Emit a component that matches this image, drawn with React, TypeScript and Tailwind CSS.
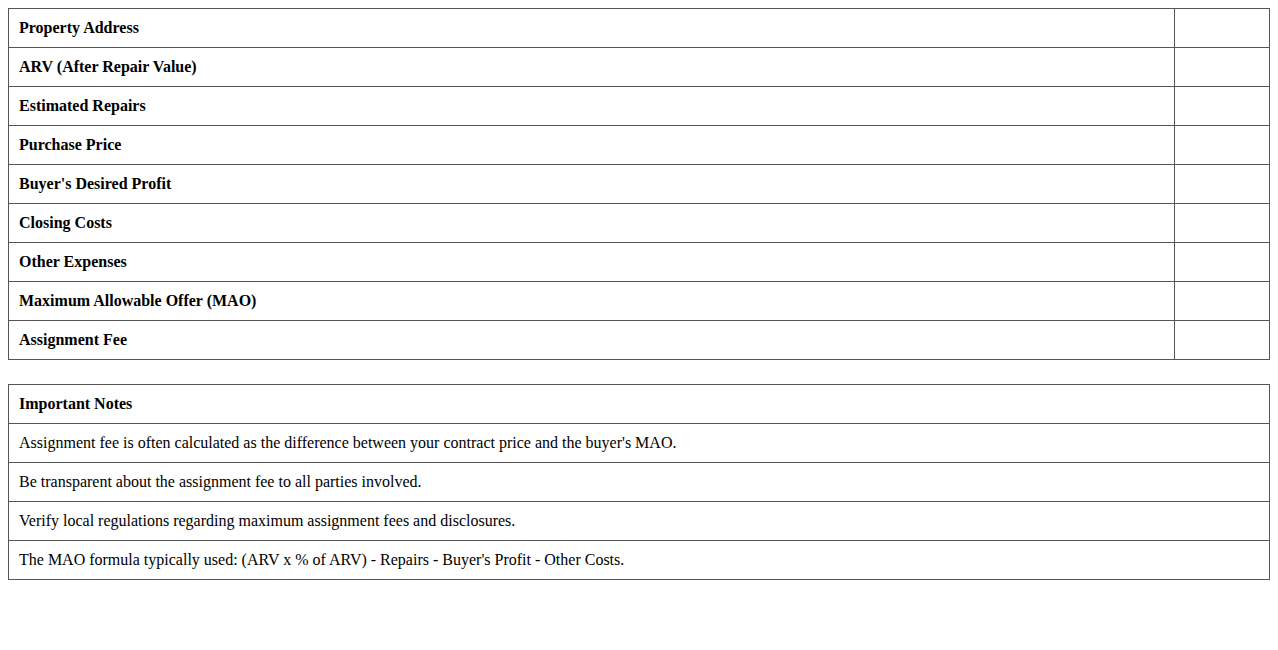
const FIELDS = [
  "Property Address",
  "ARV (After Repair Value)",
  "Estimated Repairs",
  "Purchase Price",
  "Buyer's Desired Profit",
  "Closing Costs",
  "Other Expenses",
  "Maximum Allowable Offer (MAO)",
  "Assignment Fee",
];

const NOTES = [
  "Assignment fee is often calculated as the difference between your contract price and the buyer's MAO.",
  "Be transparent about the assignment fee to all parties involved.",
  "Verify local regulations regarding maximum assignment fees and disclosures.",
  "The MAO formula typically used: (ARV x % of ARV) - Repairs - Buyer's Profit - Other Costs.",
];

export default function App() {
  return (
    <div className="min-h-screen bg-white p-2 text-[16px] leading-[18px] text-black font-['Liberation_Serif','Times_New_Roman',serif]">
      {/* Deal worksheet */}
      <table className="mb-6 w-full border-collapse border border-[#555]">
        <tbody>
          {FIELDS.map((label) => (
            <tr key={label}>
              <td className="border border-[#555] px-[10px] py-[10px] text-left font-bold">{label}</td>
              <td className="w-[95px] border border-[#555] px-[10px] py-[10px]" />
            </tr>
          ))}
        </tbody>
      </table>

      {/* Notes */}
      <table className="w-full border-collapse border border-[#555]">
        <tbody>
          <tr>
            <td className="border border-[#555] px-[10px] py-[10px] font-bold">Important Notes</td>
          </tr>
          {NOTES.map((note) => (
            <tr key={note}>
              <td className="border border-[#555] px-[10px] py-[10px]">{note}</td>
            </tr>
          ))}
        </tbody>
      </table>
    </div>
  );
}
